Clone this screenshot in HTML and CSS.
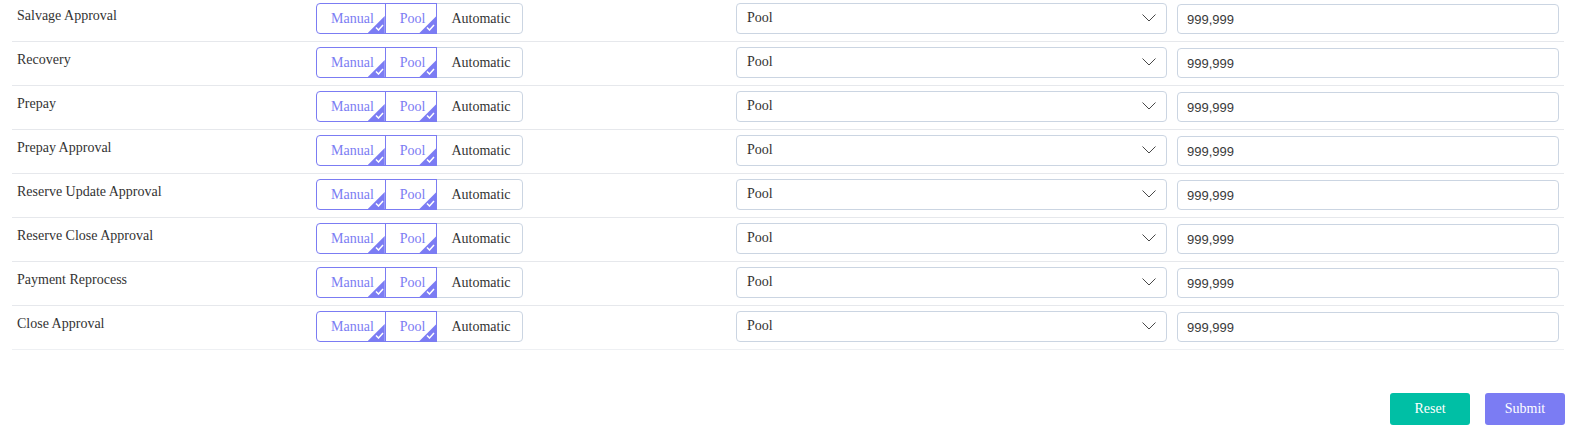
FILE: index.html
```html
<!DOCTYPE html>
<html lang="en">
<head>
  <meta charset="UTF-8" />
  <title>Approval Routing</title>
  <link rel="stylesheet" href="styles.css">
</head>
<body>

  <div class="page">
    <div class="rule-list" id="ruleList"></div>

    <div class="actions">
      <button class="btn btn-reset">Reset</button>
      <button class="btn btn-submit">Submit</button>
    </div>
  </div>

  <script>
    // Approval steps, each routed Manual + Pool by default
    const rules = [
      'Salvage Approval',
      'Recovery',
      'Prepay',
      'Prepay Approval',
      'Reserve Update Approval',
      'Reserve Close Approval',
      'Payment Reprocess',
      'Close Approval'
    ];

    const tick = '<span class="tick"><svg width="9" height="7" viewBox="0 0 9 7">' +
      '<path d="M1 3.5 L3.5 6 L8 1" fill="none" stroke="#fff" stroke-width="1.5"/></svg></span>';

    const chevron = '<svg class="chevron" width="14" height="8" viewBox="0 0 14 8">' +
      '<path d="M0.5 0.5 L7 7 L13.5 0.5" fill="none" stroke="#333" stroke-width="0.9"/></svg>';

    const list = document.getElementById('ruleList');

    rules.forEach(name => {
      const row = document.createElement('div');
      row.className = 'rule-row';
      row.innerHTML =
        '<div class="rule-name">' + name + '</div>' +
        '<div class="seg-group">' +
          '<span class="seg active">Manual' + tick + '</span>' +
          '<span class="seg active">Pool' + tick + '</span>' +
          '<span class="seg">Automatic</span>' +
        '</div>' +
        '<div class="select-box"><span>Pool</span>' + chevron + '</div>' +
        '<input class="limit-input" type="text" value="999,999" />';
      list.appendChild(row);
    });
  </script>

</body>
</html>
```

FILE: styles.css
```css
/* Base */
html, body {
  margin: 0;
  padding: 0;
  background: #ffffff;
  color: #333333;
  font-family: "Liberation Serif", "Times New Roman", serif;
  font-size: 14px;
}

.page {
  padding: 0 29px 0 12px;
}

/* One line per approval step */
.rule-row {
  display: grid;
  grid-template-columns: 289px 410px 431px 1fr;
  column-gap: 10px;
  align-items: start;
  padding: 5px 5px 7px;
  border-bottom: 1px solid #e6e8ec;
}
.rule-row:first-child {
  padding-top: 3px;
}
.rule-row:last-child {
  border-bottom-color: #eef0f3;
}

.rule-name {
  padding-top: 3px;
  line-height: 20px;
}

/* Manual / Pool / Automatic toggle */
.seg-group {
  display: flex;
  height: 31px;
}
.seg {
  position: relative;
  display: flex;
  align-items: center;
  padding: 0 11px 0 14px;
  border: 1px solid #cbd5e2;
  color: #333;
  box-sizing: border-box;
  cursor: pointer;
}
.seg + .seg {
  margin-left: -1px;
}
.seg:first-child {
  border-radius: 4px 0 0 4px;
}
.seg:last-child {
  border-radius: 0 4px 4px 0;
}
.seg.active {
  border-color: #7b7cf3;
  color: #7b7cf3;
  z-index: 1;
}

/* checked corner marker */
.tick {
  position: absolute;
  right: 0;
  bottom: 0;
  width: 17px;
  height: 17px;
  background: #7b7cf3;
  clip-path: polygon(100% 0, 100% 100%, 0 100%);
}
.tick svg {
  position: absolute;
  right: 1px;
  bottom: 2px;
}

/* Select + amount input */
.select-box {
  display: flex;
  align-items: center;
  justify-content: space-between;
  height: 31px;
  padding: 0 10px 1px 10px;
  border: 1px solid #cbd5e2;
  border-radius: 4px;
  box-sizing: border-box;
  color: #333;
}
.chevron {
  display: block;
}

.limit-input {
  height: 30px;
  margin-top: 1px;
  padding: 0 9px;
  border: 1px solid #cbd5e2;
  border-radius: 4px;
  box-sizing: border-box;
  width: 100%;
  font-family: "Liberation Sans", Arial, sans-serif;
  font-size: 13px;
  color: #3a3a3a;
  outline: none;
}

/* Footer buttons */
.actions {
  display: flex;
  justify-content: flex-end;
  gap: 15px;
  margin-top: 43px;
  margin-right: -1px;
}
.btn {
  width: 80px;
  height: 32px;
  border: none;
  border-radius: 3px;
  color: #ffffff;
  font-family: "Liberation Serif", "Times New Roman", serif;
  font-size: 14px;
  cursor: pointer;
}
.btn-reset {
  background: #00bfa5;
}
.btn-submit {
  background: #7b7cf3;
}
```
